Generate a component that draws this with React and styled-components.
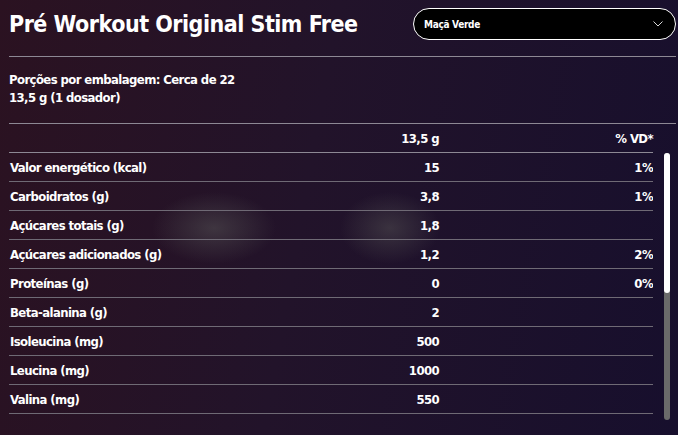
import React from 'react';
import styled, { createGlobalStyle } from 'styled-components';

const GlobalStyle = createGlobalStyle`
    html, body {
        margin: 0;
        padding: 0;
        background: #1d1226;
    }
    body {
        font-family: "DejaVu Sans Condensed", "Liberation Sans Narrow", "Liberation Sans", sans-serif;
        font-weight: 700;
        color: #fff;
    }
`;

const Page = styled.main`
    width: 678px;
    height: 435px;
    box-sizing: border-box;
    padding: 8px 2px 0 9px;
    overflow: hidden;
    background:
        radial-gradient(ellipse 62px 36px at 214px 228px, rgba(80, 76, 80, 0.6), transparent),
        radial-gradient(ellipse 50px 36px at 390px 228px, rgba(80, 76, 80, 0.55), transparent),
        linear-gradient(100deg, #2b1221 0%, #22132a 45%, #170f2d 100%);
`;

const Header = styled.header`
    display: flex;
    align-items: center;
    justify-content: space-between;
    padding-bottom: 16px;
    border-bottom: 1px solid #8d8894;
`;

const Title = styled.h1`
    margin: 0;
    font-size: 23px;
    line-height: 26px;
    font-weight: 700;
    letter-spacing: -0.5px;
`;

const Select = styled.button`
    width: 263px;
    height: 32px;
    box-sizing: border-box;
    display: flex;
    align-items: center;
    justify-content: space-between;
    padding: 0 12px 0 10px;
    background: #000;
    border: 1px solid #fff;
    border-radius: 16px;
    color: #fff;
    font-family: inherit;
    font-weight: 700;
    font-size: 10px;
    letter-spacing: -0.3px;
`;

const Servings = styled.section`
    padding: 14px 0 16px;
    border-bottom: 1px solid #8d8894;
    font-size: 13px;
    line-height: 18px;
    letter-spacing: -0.6px;

    p {
        margin: 0;
    }
`;

const Row = styled.div`
    display: grid;
    grid-template-columns: 1fr 110px 214px;
    align-items: center;
    height: 28px;
    padding-left: 1px;
    border-bottom: 1px solid ${p => p.$head ? '#8d8894' : '#6f6a75'};
    font-size: 13px;
    letter-spacing: -0.6px;

    span:not(:first-child) {
        text-align: right;
    }
`;

const HeadRow = styled(Row)`
    margin-right: 23px;
`;

const Body = styled.div`
    display: flex;
    height: 267px;
    gap: 11px;
    margin-right: 6px;
`;

const List = styled.div`
    flex: 1;
    overflow: hidden;
`;

const Track = styled.div`
    width: 6px;
    border-radius: 3px;
    background: #6a6a6a;
`;

const Thumb = styled.div`
    height: 140px;
    border-radius: 3px;
    background: #fff;
`;

const nutrients = [
    ['Valor energético (kcal)', '15', '1%'],
    ['Carboidratos (g)', '3,8', '1%'],
    ['Açúcares totais (g)', '1,8', ''],
    ['Açúcares adicionados (g)', '1,2', '2%'],
    ['Proteínas (g)', '0', '0%'],
    ['Beta-alanina (g)', '2', ''],
    ['Isoleucina (mg)', '500', ''],
    ['Leucina (mg)', '1000', ''],
    ['Valina (mg)', '550', ''],
];

function Chevron() {
    return (
        <svg width="10" height="6" viewBox="0 0 10 6" fill="none">
            <polyline points="0.5,0.5 5,5 9.5,0.5" stroke="#d8d8d8" strokeWidth="1" />
        </svg>
    );
}

export default function App() {
    return (
        <Page>
            <GlobalStyle />
            <Header>
                <Title>Pré Workout Original Stim Free</Title>
                <Select>
                    <span>Maçã Verde</span>
                    <Chevron />
                </Select>
            </Header>
            <Servings>
                <p>Porções por embalagem: Cerca de 22</p>
                <p>13,5 g (1 dosador)</p>
            </Servings>
            <HeadRow $head>
                <span></span>
                <span>13,5 g</span>
                <span>% VD*</span>
            </HeadRow>
            <Body>
                <List>
                    {nutrients.map(([name, amount, vd]) => (
                        <Row key={name}>
                            <span>{name}</span>
                            <span>{amount}</span>
                            <span>{vd}</span>
                        </Row>
                    ))}
                </List>
                <Track>
                    <Thumb />
                </Track>
            </Body>
        </Page>
    );
}
